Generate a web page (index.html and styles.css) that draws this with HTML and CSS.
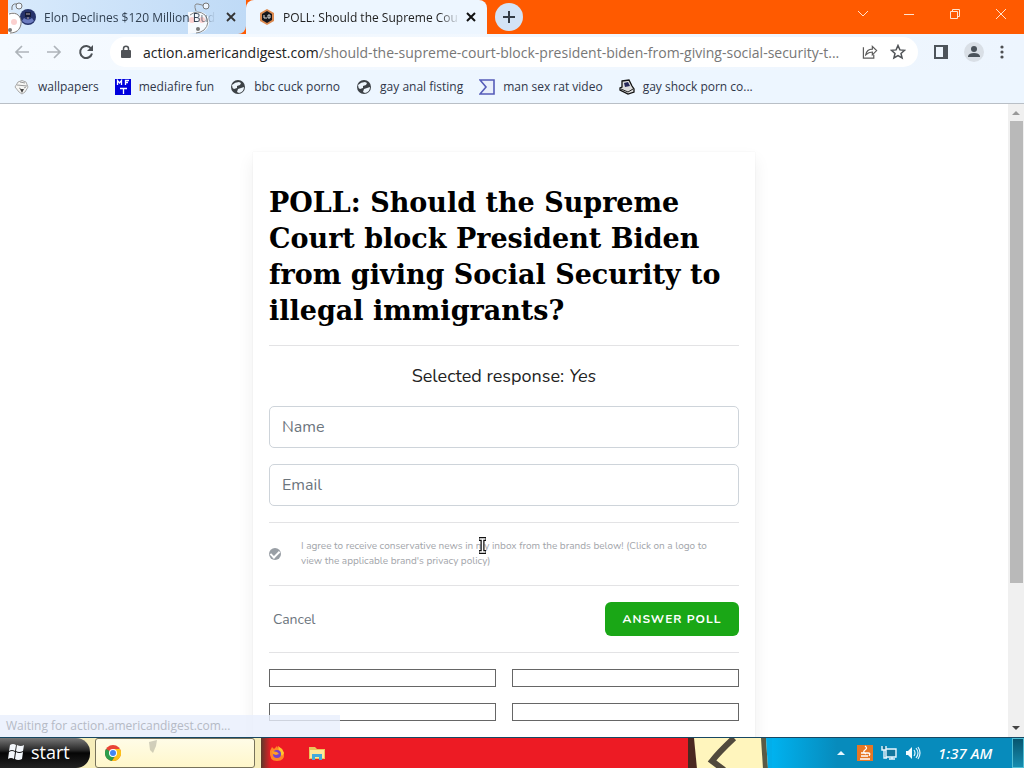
FILE: index.html
```html
<!DOCTYPE html>
<html lang="en">
<head>
    <meta charset="UTF-8">
    <meta name="viewport" content="width=device-width, initial-scale=1.0">
    <title>POLL: Should the Supreme Court</title>
    <link rel="stylesheet" href="styles.css">
</head>
<body>
    <!-- tabs -->
    <header class="tabs">
        <div class="tab tab-old">
            <svg class="bug bug-left" width="26" height="34" viewBox="0 0 26 34"><path d="M0 34V13C8 10 14 16 13 24C13 29 9 33 3 34Z" fill="#fff"/><path d="M1 14C9 11 14 17 13 24C12 30 8 33 2 33M4 10Q3 3 9 4l5 2" fill="none" stroke="#777"/><circle cx="11" cy="6" r="3" fill="#eef6ff" stroke="#777"/><circle cx="6" cy="22" r="3" fill="#fbd0cf"/><circle cx="2" cy="30" r="2" fill="#777"/></svg>
            <svg class="icon" width="16" height="16" viewBox="0 0 16 16"><circle cx="8" cy="8" r="8" fill="#26336b"/><path d="M4 9q4 3 8 0l2 3q-6 5-12 0z" fill="#6c7cc0"/><path d="M5 3h6v5H5z" fill="#141a38"/><path d="M6 5h4M7 9h2" stroke="#b6a9a8"/></svg>
            <svg class="bug bug-right" width="28" height="34" viewBox="0 0 28 34"><path d="M0 12h14q8 3 7 12q-2 8-10 9L0 34z" fill="#fff" fill-opacity=".85"/><path d="M2 15q8-6 15 0q6 8-1 15q-4 3-8 3M8 11Q5 3 10 4l8 2" fill="none" stroke="#888"/><circle cx="18" cy="6" r="3" fill="#eef6ff" stroke="#777"/><circle cx="4" cy="20" r="3" fill="#fbd0cf"/><circle cx="14" cy="20" r="3" fill="#fbd0cf"/><circle cx="10" cy="29" r="2" fill="#777"/></svg>
            <span class="tab-text">Elon Declines $120 Million Bud</span>
            <button class="close" aria-label="Close tab"><svg width="10" height="10" viewBox="0 0 10 10"><path d="M1 1l8 8M9 1L1 9" stroke="#333" stroke-width="1.8"/></svg></button>
        </div>
        <div class="tab tab-active">
            <svg class="icon" width="16" height="16" viewBox="0 0 16 16"><path d="M8 0l7 4v8l-7 4-7-4V4z" fill="#dc8a50"/><path d="M8 2l5 3v6l-5 3-5-3V5z" fill="#16161c"/><path d="M5 6v3h3M9 6h2v3H9z" stroke="#ddd" fill="none"/></svg>
            <span class="tab-text">POLL: Should the Supreme Cou</span>
            <button class="close" aria-label="Close tab"><svg width="10" height="10" viewBox="0 0 10 10"><path d="M1 1l8 8M9 1L1 9" stroke="#111" stroke-width="2"/></svg></button>
        </div>
        <button class="new-tab" aria-label="New tab"><svg width="12" height="12" viewBox="0 0 12 12"><path d="M6 0v12M0 6h12" stroke="#333b45" stroke-width="2"/></svg></button>
        <div class="window-buttons">
            <button aria-label="Search tabs"><svg width="12" height="12" viewBox="0 0 12 12"><path d="M1 3l5 5 5-5"/></svg></button>
            <button aria-label="Minimize"><svg width="12" height="12" viewBox="0 0 12 12"><path d="M1 6.5h10"/></svg></button>
            <button aria-label="Restore"><svg width="12" height="12" viewBox="0 0 12 12"><path d="M1.5 3.5h7v7h-7zM3.5 3V1.5h7v7H9"/></svg></button>
            <button aria-label="Close"><svg width="12" height="12" viewBox="0 0 12 12"><path d="M1 1l10 10M11 1L1 11"/></svg></button>
        </div>
    </header>

    <!-- address bar -->
    <nav class="toolbar">
        <button aria-label="Back"><svg width="16" height="16" viewBox="0 0 16 16"><path d="M15 8H2M8 2L2 8l6 6" fill="none" stroke="#aeb4ba" stroke-width="1.7"/></svg></button>
        <button aria-label="Forward"><svg width="16" height="16" viewBox="0 0 16 16"><path d="M1 8h13M8 2l6 6-6 6" fill="none" stroke="#aeb4ba" stroke-width="1.7"/></svg></button>
        <button aria-label="Reload"><svg width="16" height="16" viewBox="0 0 16 16"><path d="M13.2 4.7A6 6 0 1 0 14 9.5" fill="none" stroke="#4c5156" stroke-width="2"/><path d="M15 1v6H9z" fill="#4c5156"/></svg></button>
        <div class="address">
            <svg width="10" height="14" viewBox="0 0 10 14"><path d="M2.5 6V3.7a2.5 2.5 0 0 1 5 0V6" fill="none" stroke="#505357" stroke-width="1.5"/><rect x="0" y="5" width="10" height="8" rx="1" fill="#505357"/></svg>
            <div class="url"><b>action.americandigest.com</b>/should-the-supreme-court-block-president-biden-from-giving-social-security-t...</div>
            <button aria-label="Share"><svg width="16" height="16" viewBox="0 0 17 16"><path d="M1.5 3v11.5h11V11M4 11q1-6 7-6V2l4.5 4.5L11 11V8Q7 8 4 11z" fill="none" stroke="#5c5c5c" stroke-width="1.3"/></svg></button>
            <button aria-label="Bookmark this tab"><svg width="16" height="16" viewBox="0 0 16 16"><path d="M8 1.5l1.9 4.4 4.7.4-3.6 3.1 1.1 4.6L8 11.6 3.9 14 5 9.4 1.4 6.3l4.7-.4z" fill="none" stroke="#505357" stroke-width="1.5"/></svg></button>
        </div>
        <button aria-label="Side panel"><svg width="14" height="14" viewBox="0 0 14 14"><path d="M1 1h12v12H1z" fill="none" stroke="#4d545b" stroke-width="2"/><path d="M9 1h4v12H9z" fill="#4d545b"/></svg></button>
        <button class="profile" aria-label="Profile"><svg width="20" height="20" viewBox="0 0 20 20"><circle cx="10" cy="10" r="10" fill="#d9dfe6"/><circle cx="10" cy="7" r="3" fill="#4a525a"/><path d="M4 15v-1q1-3 6-3t6 3v1z" fill="#4a525a"/></svg></button>
        <button aria-label="Menu"><svg width="4" height="14" viewBox="0 0 4 14" fill="#4d4f52"><circle cx="2" cy="2" r="1.6"/><circle cx="2" cy="7" r="1.6"/><circle cx="2" cy="12" r="1.6"/></svg></button>
    </nav>

    <nav class="bookmarks">
        <a href="#"><svg width="16" height="16" viewBox="0 0 16 16"><path d="M4 3q4-3 8 0l2 5-3 5-3 2-3-2-4-5z" fill="#f6f6f4" stroke="#aaa"/><path d="M3 6l10 1M5 9l2 1M10 9l2-1M6 3l5 1" stroke="#999"/><path d="M6 10h4l-2 4z" fill="#444"/></svg>wallpapers</a>
        <a href="#"><svg width="16" height="16" viewBox="0 0 16 16"><path d="M0 0h16v16H0z" fill="#00d"/><path d="M2.5 6V1.5L4.5 4l2-2.5V6M10.5 6V1.5H14M10.5 3.5H13M5 9.5h7M8.5 9.5V15" fill="none" stroke="#fff" stroke-width="1.3"/></svg>mediafire fun</a>
        <a href="#"><svg width="16" height="16" viewBox="0 0 16 16"><circle cx="8" cy="8" r="7" fill="#3c4146"/><path d="M2 6q3-3 7-3l2 1-1 2-3 1v2l-3 1q-2-1-2-4zM7 13l1-3 3-1 3-1q0 5-5 6z" fill="#edf5fc"/></svg>bbc cuck porno</a>
        <a href="#"><svg width="16" height="16" viewBox="0 0 16 16"><circle cx="8" cy="8" r="7" fill="#3c4146"/><path d="M2 6q3-3 7-3l2 1-1 2-3 1v2l-3 1q-2-1-2-4zM7 13l1-3 3-1 3-1q0 5-5 6z" fill="#edf5fc"/></svg>gay anal fisting</a>
        <a href="#"><svg width="16" height="16" viewBox="0 0 16 16"><path d="M1 1h14v14H1l6-7z" fill="#e9effb" stroke="#555cb9" stroke-width="1.6"/></svg>man sex rat video</a>
        <a href="#"><svg width="16" height="16" viewBox="0 0 16 16"><path d="M3 2l7-1 3 6 2 3v3l-6 2-8-4V9l2-1z" fill="#ddd" stroke="#111" stroke-width="1.3"/><path d="M5 4l4-1 2 4-5 1z" fill="#272858"/><path d="M2 10l7 3 5-3" fill="none" stroke="#222"/></svg>gay shock porn co...</a>
    </nav>

    <div class="window">
        <main class="page">
            <form class="card">
                <h1>POLL: Should the Supreme Court block President Biden from giving Social Security to illegal immigrants?</h1>
                <hr>
                <p class="response">Selected response: <em>Yes</em></p>
                <input class="field" type="text" placeholder="Name" aria-label="Name">
                <input class="field" type="email" placeholder="Email" aria-label="Email">
                <hr>
                <div class="agree">
                    <input type="checkbox" id="agree" checked>
                    <label for="agree">I agree to receive conservative news in my inbox from the brands below! (Click on a logo to view the applicable brand's privacy policy)</label>
                    <svg class="cursor" width="9" height="17" viewBox="0 0 9 17"><path d="M1 2h7M1 15h7M4.5 2v13" stroke="#111" stroke-width="4"/><path d="M1.5 2h6M1.5 15h6M4.5 2v13" stroke="#fff" stroke-width="1.5"/></svg>
                </div>
                <hr>
                <div class="actions">
                    <a href="#">Cancel</a>
                    <button type="submit">ANSWER POLL</button>
                </div>
                <hr>
                <div class="brands">
                    <a href="#" aria-label="Brand 1"></a>
                    <a href="#" aria-label="Brand 2"></a>
                    <a href="#" aria-label="Brand 3"></a>
                    <a href="#" aria-label="Brand 4"></a>
                </div>
            </form>
        </main>
        <div class="scrollbar">
            <svg width="16" height="17" viewBox="0 0 16 17"><path d="M4 11l4-4 4 4z" fill="#999"/></svg>
            <div class="thumb"></div>
            <svg width="16" height="17" viewBox="0 0 16 17"><path d="M4 6l4 4 4-4z" fill="#444"/></svg>
        </div>
        <div class="status">Waiting for action.americandigest.com...</div>
    </div>

    <!-- taskbar -->
    <footer class="taskbar">
        <button class="start"><svg width="18" height="18" viewBox="0 0 18 18"><path d="M3 2q3-2 6 0L8 8Q5 6 2 8zM10 2q4 2 7 0l-1 6q-4 2-7 0zM2 9q3-2 6 0l-1 7q-3-2-6 0zM9 9q3 2 7 0l-1 7q-4 2-7 0z" fill="#f3f7fb"/></svg>start</button>
        <button class="task" aria-label="Chrome">
            <svg width="16" height="16" viewBox="0 0 16 16"><circle cx="8" cy="8" r="8" fill="#e94335"/><path d="M8 8L1 4a8 8 0 0 0 6 12l4-7z" fill="#2c9e4b"/><path d="M8 4h7a8 8 0 0 1-8 12l4-6z" fill="#fbc116"/><circle cx="8" cy="8" r="4" fill="#fff"/><circle cx="8" cy="8" r="3" fill="#4285f4"/></svg>
            <svg class="smudge" width="14" height="16" viewBox="0 0 14 16"><path d="M2 3l8-2-1 6-3 7-3-3z" fill="#8d8c80" fill-opacity=".4"/></svg>
        </button>
        <div class="pinned">
            <svg width="16" height="16" viewBox="0 0 16 16"><path d="M1 6l2-4 2 2 3-3 1 2 4 1 2 4q1 8-7 8T1 6z" fill="#ff8626"/><path d="M9 1l4 3 2 4-2 3-3-5z" fill="#ffc62e"/><circle cx="8" cy="9" r="4" fill="#7542cb"/><path d="M3 6l5 1 2 2-3 1-3-1z" fill="#ff9f24"/></svg>
            <svg width="16" height="16" viewBox="0 0 16 16"><path d="M0 2h6l2 2h8v10H0z" fill="#eac65b"/><path d="M1 5h14v8H1z" fill="#ffe799"/><path d="M3 9h10v6h-3v-3H6v3H3z" fill="#45aadb"/></svg>
        </div>
        <svg class="drawing" width="84" height="31" viewBox="0 0 84 31"><path d="M0 0h84v31H0z" fill="#fff5bd"/><path d="M0 0h6l3 31H0z" fill="#4a2820"/><path d="M46 0Q31 14 24 23l12 9" fill="none" stroke="#51493c" stroke-width="6"/><path d="M73 0h5l2 31h-5z" fill="#5a5a45"/><path d="M78 0h6v31h-4z" fill="#02aeea"/></svg>
        <div class="tray">
            <svg width="8" height="6" viewBox="0 0 8 6"><path d="M0 5l4-4 4 4z" fill="#e8f7ff"/></svg>
            <svg width="16" height="16" viewBox="0 0 16 16"><path d="M0 0h16v16H0z" fill="#e77724"/><path d="M8 1q3 2 0 4t1 4M4 8h7q3 0 1 3M4 11h7M3 14h10" fill="none" stroke="#fff" stroke-width="1.3"/></svg>
            <svg width="16" height="16" viewBox="0 0 16 16"><path d="M5 4h10v8H5zM8 14h6M11 12v2M1 1v4h4V1M3 5v8h3" fill="#14769b" stroke="#e9f7ff" stroke-width="1.4"/></svg>
            <svg width="16" height="16" viewBox="0 0 16 16"><path d="M1 6h2l4-4v12l-4-4H1z" fill="#f4fcff"/><path d="M9 5q2 3 0 6M11 3q4 5 0 10M13 2q4 6 0 12" fill="none" stroke="#dff4ff" stroke-width="1.2"/></svg>
            <span class="clock">1:37 AM</span>
            <button class="desktop" aria-label="Show desktop"></button>
        </div>
    </footer>
</body>
</html>
```
FILE: styles.css
```css
* {
    box-sizing: border-box;
}
body {
    margin: 0;
    height: 100vh;
    display: flex;
    flex-direction: column;
    overflow: hidden;
    background: #fff;
    font-family: "Comic Sans MS", "Open Sans", sans-serif;
}
button {
    border: 0;
    padding: 0;
    background: none;
    font-family: inherit;
    display: flex;
    align-items: center;
    justify-content: center;
}
a {
    color: inherit;
    text-decoration: none;
}
svg {
    flex: none;
}

/* tabs */
.tabs {
    flex: none;
    height: 34px;
    display: flex;
    background: #ff5a00;
}
.tab {
    position: relative;
    display: flex;
    align-items: center;
    gap: 8px;
    font-size: 12px;
    color: #303f50;
}
.tab-old {
    width: 238px;
    margin-left: 8px;
    padding: 0 8px 0 12px;
    background: linear-gradient(to right, #d8eafc, #bfdaf6);
    border-radius: 0 0 8px 0;
}
.tab-active {
    width: 241px;
    padding: 0 9px 0 13px;
    background: #edf6ff;
    border-radius: 8px 8px 0 0;
    color: #222;
}
.tab-text {
    position: relative;
    flex: 1;
    white-space: nowrap;
    -webkit-mask-image: linear-gradient(to right, #000 88%, transparent);
    mask-image: linear-gradient(to right, #000 88%, transparent);
}
.tab-active .tab-text {
    margin-right: -4px;
}
.close {
    width: 14px;
    height: 14px;
}
.bug {
    position: absolute;
    top: 0;
}
.bug-left {
    left: 0;
}
.bug-right {
    right: 30px;
}
.new-tab {
    width: 28px;
    height: 28px;
    margin: 3px 8px;
    border-radius: 50%;
    background: #d3e3f5;
}
.window-buttons {
    display: flex;
    margin-left: auto;
}
.window-buttons button {
    width: 46px;
    height: 28px;
}
.window-buttons path {
    fill: none;
    stroke: #ffe3cf;
}

/* address bar */
.toolbar {
    flex: none;
    height: 36px;
    display: flex;
    align-items: center;
    gap: 16px;
    padding: 0 20px 0 14px;
    background: linear-gradient(to right, #f5faff, #edf5fe);
}
.address {
    flex: 1;
    min-width: 0;
    height: 30px;
    display: flex;
    align-items: center;
    gap: 12px;
    padding: 0 12px 0 11px;
    border-radius: 15px;
    background: #fff;
}
.url {
    flex: 1;
    overflow: hidden;
    white-space: nowrap;
    font-size: 14px;
    color: #777;
}
.url b {
    font-weight: normal;
    color: #222;
}

.bookmarks {
    flex: none;
    height: 34px;
    display: flex;
    align-items: center;
    gap: 16px;
    padding-left: 14px;
    background: #edf6ff;
    border-bottom: 1px solid #b9bfc6;
    font-size: 12px;
    color: #30374a;
}
.bookmarks a {
    display: flex;
    align-items: center;
    gap: 8px;
    white-space: nowrap;
}

/* page */
.window {
    position: relative;
    flex: 1;
    min-height: 0;
    display: flex;
    overflow: hidden;
}
.page {
    flex: 1;
    padding: 48px 16px;
    font-family: Nunito, Lato, sans-serif;
}
.card {
    max-width: 502px;
    min-height: 640px;
    margin: 0 auto;
    padding: 33px 16px 16px;
    box-shadow: 0 0 1px rgba(0, 0, 0, 0.1), 0 8px 16px rgba(0, 0, 0, 0.07);
}
h1 {
    margin: 0 0 16px;
    font-family: Georgia, "DejaVu Serif", serif;
    font-size: 27px;
    line-height: 36px;
    color: #000;
}
hr {
    margin: 16px 0;
    border: 0;
    border-top: 1px solid #e3e3e5;
}
.response {
    margin: 16px 0;
    font-size: 18px;
    line-height: 28px;
    text-align: center;
    color: #222;
}
.field {
    display: block;
    width: 100%;
    height: 42px;
    margin-bottom: 16px;
    padding: 0 12px;
    border: 1px solid #ced4da;
    border-radius: 5px;
    font-family: inherit;
    font-size: 16px;
}
.field::placeholder {
    color: #6c757d;
}
.agree {
    position: relative;
    display: flex;
    align-items: center;
    gap: 20px;
    padding-right: 16px;
    font-size: 10px;
    line-height: 15px;
    color: #a2a5aa;
}
.agree input {
    appearance: none;
    flex: none;
    width: 12px;
    height: 12px;
    margin: 0;
    border-radius: 50%;
    background: #999fa5;
    display: flex;
    justify-content: center;
}
.agree input::after {
    content: "";
    width: 4px;
    height: 7px;
    margin-top: 1px;
    border: solid #fff;
    border-width: 0 2px 2px 0;
    transform: rotate(45deg);
}
.cursor {
    position: absolute;
    left: 209px;
    top: -2px;
}
.actions {
    display: flex;
    align-items: center;
    justify-content: space-between;
    padding-left: 4px;
    font-size: 14px;
    color: #6c757d;
}
.actions button {
    width: 134px;
    height: 34px;
    border-radius: 6px;
    background: #1aa716;
    color: #fff;
    font-size: 12px;
    font-weight: bold;
    letter-spacing: 1px;
}
.brands {
    display: grid;
    grid-template-columns: 1fr 1fr;
    gap: 16px;
}
.brands a {
    height: 18px;
    border: 1px solid #666;
}
.scrollbar {
    width: 16px;
    display: flex;
    flex-direction: column;
    background: #f0f0f0;
}
.thumb {
    height: 73%;
    margin: 0 1px auto 2px;
    background: #b9b9b9;
}
.status {
    position: absolute;
    left: 0;
    bottom: 0;
    width: 340px;
    height: 22px;
    padding-left: 6px;
    background: rgba(232, 239, 252, 0.8);
    font-size: 12px;
    line-height: 22px;
    color: #b5bac5;
}

/* taskbar */
.taskbar {
    flex: none;
    height: 31px;
    display: flex;
    border-top: 1px solid #174863;
    background: #f6edba;
}
.start {
    width: 90px;
    gap: 6px;
    padding: 0 0 2px 7px;
    justify-content: flex-start;
    border-radius: 0 14px 14px 0;
    background: linear-gradient(#777, #292929 40%, #050505 50%, #222);
    color: #fff;
    font-family: "Open Sans", sans-serif;
    font-size: 18px;
}
.task {
    position: relative;
    width: 160px;
    margin-left: 5px;
    padding-left: 9px;
    justify-content: flex-start;
    border: 1px solid #77725b;
    border-radius: 3px;
    background: linear-gradient(#fffce7, #fff7cb);
}
.smudge {
    margin-left: 26px;
    align-self: flex-start;
}
.pinned {
    flex: 1;
    display: flex;
    align-items: center;
    gap: 24px;
    margin-left: 6px;
    padding-left: 8px;
    background: linear-gradient(to right, #5b3a2c, #ed1b24 10px);
}
.tray {
    width: 252px;
    display: flex;
    align-items: center;
    gap: 8px;
    padding-left: 65px;
    background: linear-gradient(to right, #00b2ef, #078bbc 65px);
}
.tray svg:first-child {
    margin-right: 4px;
}
.clock {
    margin-left: 9px;
    font-family: "Noto Sans", sans-serif;
    font-size: 15px;
    font-style: italic;
    font-weight: 500;
    white-space: nowrap;
    color: #fff;
}
.desktop {
    width: 12px;
    height: 30px;
    margin-left: auto;
    border: 1px solid #50bfd6;
    background: linear-gradient(#07556f, #168db0);
}
```
